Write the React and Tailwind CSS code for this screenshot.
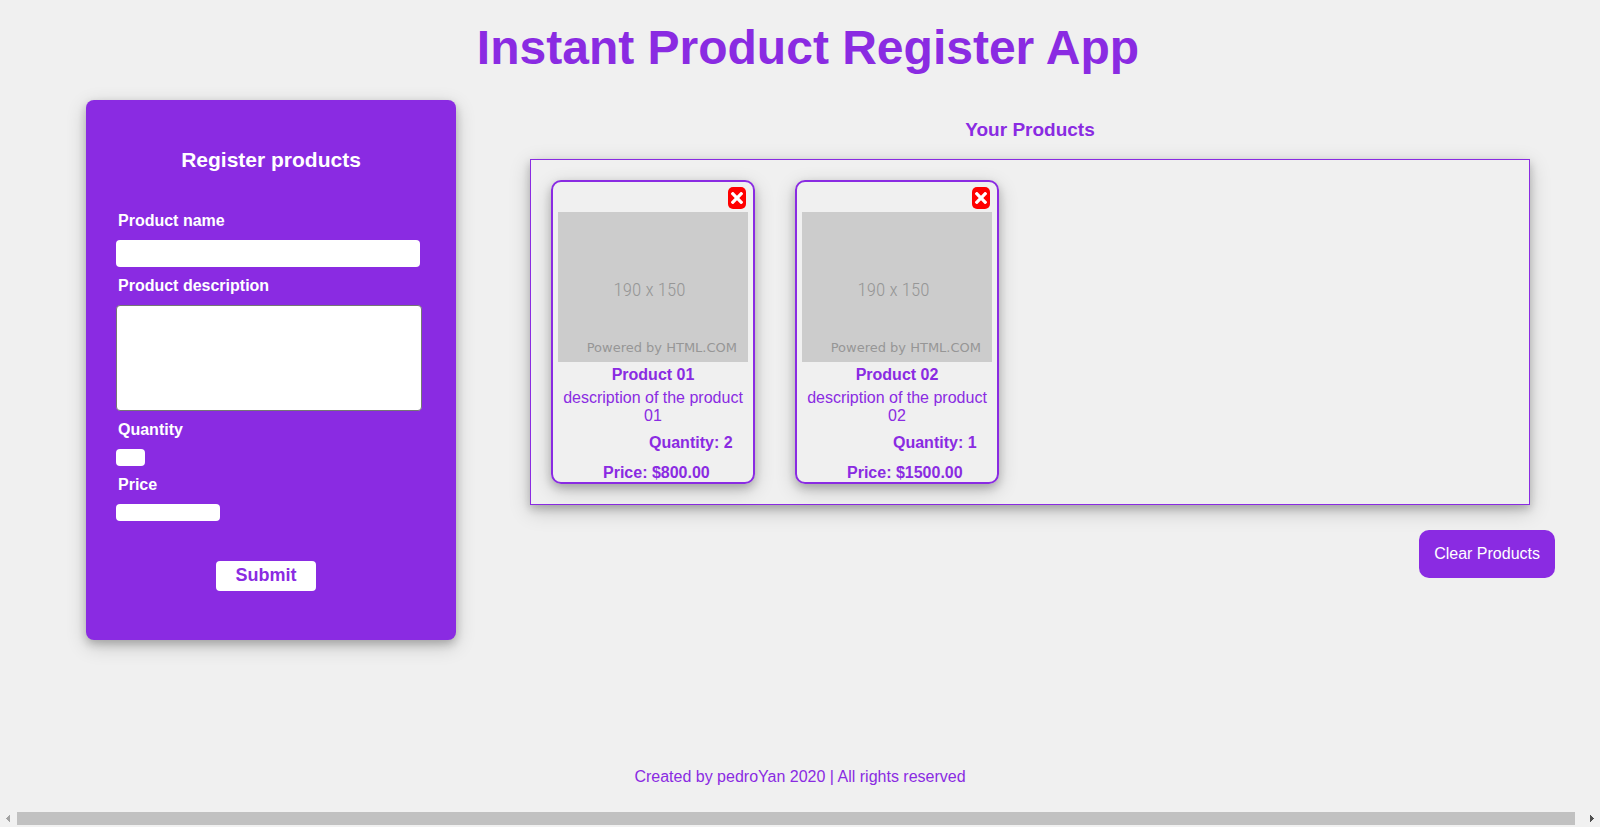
const products = [
  { id: 1, name: 'Product 01', description: 'description of the product 01', quantity: 2, price: '800.00' },
  { id: 2, name: 'Product 02', description: 'description of the product 02', quantity: 1, price: '1500.00' },
];

function CloseIcon() {
  return (
    <svg viewBox="0 0 352 512" className="h-[18px] w-3" fill="currentColor" aria-hidden="true">
      <path d="M242.72 256l100.07-100.07c12.28-12.28 12.28-32.19 0-44.48l-22.24-22.24c-12.28-12.28-32.19-12.28-44.48 0L176 189.28 75.93 89.21c-12.28-12.28-32.19-12.28-44.48 0L9.21 111.45c-12.28 12.28-12.28 32.19 0 44.48L109.28 256 9.21 356.07c-12.28 12.28-12.28 32.19 0 44.48l22.24 22.24c12.28 12.28 32.2 12.28 44.48 0L176 322.72l100.07 100.07c12.28 12.28 32.2 12.28 44.48 0l22.24-22.24c12.28-12.28 12.28-32.19 0-44.48L242.72 256z" />
    </svg>
  );
}

function ProductCard({ product }) {
  return (
    <article className="flex w-[204px] flex-col rounded-[10px] border-2 border-[#8a2be2] px-[5px] pt-[5px] shadow-[0_4px_8px_rgba(0,0,0,0.2),0_6px_20px_rgba(0,0,0,0.19)]">
      <button
        type="button"
        aria-label={`Remove ${product.name}`}
        className="mr-[2px] flex h-[22px] w-[18px] items-center justify-center self-end rounded-[5px] bg-[#ff0000] text-white"
      >
        <CloseIcon />
      </button>
      <div className="mt-[3px] flex h-[150px] flex-col items-center justify-end bg-[#cccccc] text-[#969696]">
        <span className="mr-[7px] font-['Roboto_Condensed',Roboto,sans-serif] text-[19px] font-light leading-6">190 x 150</span>
        <span className="mt-[38px] mb-[6px] mr-[11px] self-end font-['DejaVu_Sans',sans-serif] text-[13px] leading-4">Powered by HTML.COM</span>
      </div>
      <h4 className="mt-1 text-center font-bold leading-[18px]">{product.name}</h4>
      <p className="mt-[5px] text-center leading-[18px]">{product.description}</p>
      <p className="mt-[9px] pl-[91px] font-bold leading-[18px]">Quantity: {product.quantity}</p>
      <p className="mt-3 pl-[45px] font-bold leading-[18px]">Price: ${product.price}</p>
    </article>
  );
}

function RegisterForm() {
  return (
    <form
      onSubmit={(e) => e.preventDefault()}
      className="flex w-[370px] shrink-0 flex-col items-start rounded-lg bg-[#8a2be2] px-[30px] pt-12 pb-[49px] text-white shadow-[0_4px_8px_rgba(0,0,0,0.2),0_6px_20px_rgba(0,0,0,0.19)]"
    >
      <h2 className="self-center text-[21px] font-bold leading-6">Register products</h2>
      <label htmlFor="name" className="mt-10 pl-[2px] font-bold leading-[18px]">Product name</label>
      <input id="name" type="text" className="mt-[10px] h-[27px] w-[304px] rounded bg-white px-1 text-black" />
      <label htmlFor="description" className="mt-[10px] pl-[2px] font-bold leading-[18px]">Product description</label>
      <textarea id="description" className="mt-[10px] h-[106px] w-[306px] resize-none rounded border border-[#767676] bg-white p-1 text-black" />
      <label htmlFor="quantity" className="mt-[10px] pl-[2px] font-bold leading-[18px]">Quantity</label>
      <input id="quantity" type="text" className="mt-[10px] h-[17px] w-[29px] rounded bg-white text-sm text-black" />
      <label htmlFor="price" className="mt-[10px] pl-[2px] font-bold leading-[18px]">Price</label>
      <input id="price" type="text" className="mt-[10px] h-[17px] w-[104px] rounded bg-white px-1 text-sm text-black" />
      <button type="submit" className="mt-10 mr-[10px] h-[30px] w-[100px] self-center rounded bg-white pb-[3px] text-lg font-bold leading-6 text-[#8a2be2]">
        Submit
      </button>
    </form>
  );
}

function HorizontalScrollbar() {
  return (
    <div className="flex h-[17px] items-center bg-[#f1f1f1]" aria-hidden="true">
      <div className="flex w-[17px] pl-[6px]">
        <svg className="h-[7px] w-1" viewBox="0 0 4 7" shapeRendering="crispEdges"><path d="M4 0v7L0 3.5z" fill="#a3a3a3" /></svg>
      </div>
      <div className="h-[13px] flex-1 bg-[#c1c1c1]" />
      <div className="flex w-[25px] justify-end pr-[6px]">
        <svg className="h-[7px] w-1" viewBox="0 0 4 7" shapeRendering="crispEdges"><path d="M0 0v7l4-3.5z" fill="#505050" /></svg>
      </div>
    </div>
  );
}

export default function App() {
  return (
    <div className="flex min-h-screen flex-col bg-[#f0f0f0] font-['Liberation_Sans',Arial,sans-serif] text-base text-[#8a2be2]">
      <header className="pt-5 pb-6 pl-4 text-center">
        <h1 className="text-5xl font-bold leading-[56px]">Instant Product Register App</h1>
      </header>
      <main className="flex flex-1 items-start pl-[86px]">
        <RegisterForm />
        <section className="flex flex-1 flex-col pt-[19px] pr-[45px] pl-[74px]">
          <h3 className="mr-[25px] text-center text-[19px] font-bold leading-[22px]">Your Products</h3>
          <div className="mt-[18px] mr-[25px] flex flex-wrap gap-10 border border-[#8a2be2] p-5 shadow-[0_4px_8px_rgba(0,0,0,0.2),0_6px_20px_rgba(0,0,0,0.19)]">
            {products.map((product) => (
              <ProductCard key={product.id} product={product} />
            ))}
          </div>
          <button type="button" className="mt-[25px] self-end rounded-[10px] bg-[#8a2be2] p-[15px] leading-[18px] text-white">
            Clear Products
          </button>
        </section>
      </main>
      <footer className="pb-6 text-center leading-[18px]">
        <p>Created by pedroYan 2020 | All rights reserved</p>
      </footer>
      <HorizontalScrollbar />
    </div>
  );
}
